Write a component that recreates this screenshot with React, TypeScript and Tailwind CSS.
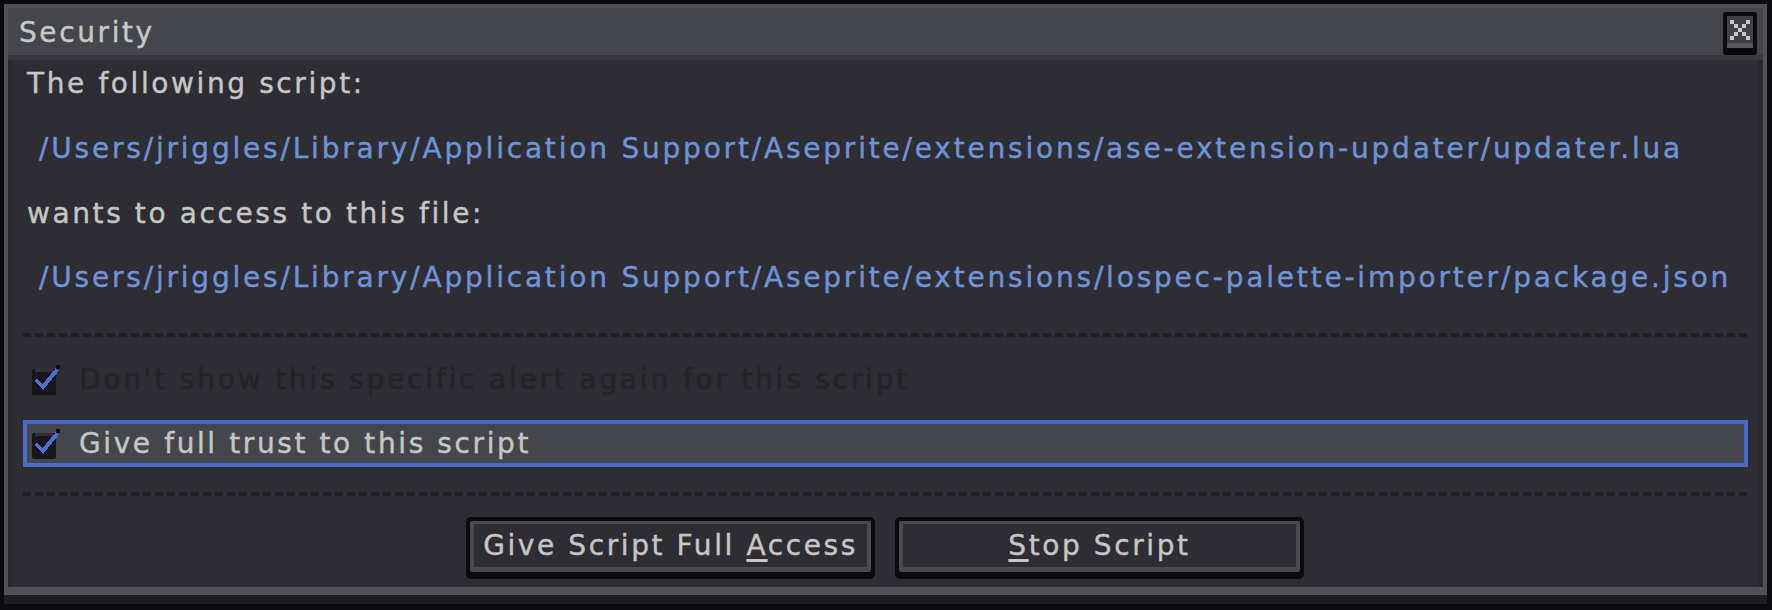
const font = "font-['DejaVu_Sans',sans-serif] text-[28px] leading-[32px] tracking-[2.6px] [-webkit-text-stroke:0.4px_currentColor]";
const wideFont = "font-['DejaVu_Sans',sans-serif] text-[28px] leading-[32px] tracking-[2.8px] [-webkit-text-stroke:0.4px_currentColor]";

const CloseX = () => {
  const cells = [
    [0, 0], [4, 0], [1, 1], [3, 1], [2, 2], [1, 3], [3, 3], [0, 4], [4, 4],
  ];
  return (
    <svg width="20" height="20" viewBox="0 0 20 20" shapeRendering="crispEdges">
      {cells.map(([x, y]) => (
        <rect key={`${x}-${y}`} x={x * 4} y={y * 4} width="4" height="4" fill="#c9c9c9" />
      ))}
    </svg>
  );
};

const CheckIcon = () => (
  <svg width="28" height="30" viewBox="0 0 28 30" shapeRendering="crispEdges">
    <rect x="0" y="4" width="24" height="26" rx="3" fill="#17171b" />
    <rect x="3" y="4" width="18" height="3" fill="#303036" />
    <rect x="24" y="0" width="4" height="4" fill="#0e0e10" />
    <polyline
      points="5,16 11,22 24,6"
      fill="none"
      stroke="#4b72d0"
      strokeWidth="4"
      strokeLinecap="square"
    />
  </svg>
);

const Button = ({ children }: { children: React.ReactNode }) => (
  <div className="w-[409px] h-[62px] bg-[#0b0b0d] rounded-[5px] pt-[4px] px-[4px] pb-[7px]">
    <div
      className={`h-full rounded-[2px] bg-[#2d2d33] border-t-[3px] border-x-[4px] border-b-[5px] border-[#4a4a50] flex items-center justify-center text-[#c6c6c6] ${font}`}
    >
      <span>{children}</span>
    </div>
  </div>
);

const Dashes = ({ className }: { className: string }) => (
  <div
    className={`h-[4px] ml-[11px] mr-[10px] bg-[repeating-linear-gradient(90deg,#1f1f24_0px,#1f1f24_8px,transparent_8px,transparent_12px)] ${className}`}
  />
);

const SecurityDialog = () => {
  return (
    <div className="w-[1772px] h-[610px] overflow-hidden bg-[#0b0b0d] pt-[4px] pl-[4px] pr-[5px] pb-[6px] flex flex-col">
      <div className="flex-1 flex flex-col border-t-4 border-x-4 border-b-[8px] border-[#505157]">
        {/* title bar */}
        <div className="h-[47px] bg-[#45464c] flex items-start justify-between pl-[11px] pr-[6px] pt-[4px]">
          <span className={`mt-[5px] text-[#c8c8c8] ${font}`}>Security</span>
          <div className="w-[34px] h-[43px] bg-[#0b0b0d] rounded-[3px] pt-[4px] px-[4px] pb-[7px]">
            <div className="h-full bg-[#404147] border-b-[5px] border-[#56575d] flex items-center justify-center">
              <CloseX />
            </div>
          </div>
        </div>
        <div className="h-[5px] bg-[#37383d]" />

        {/* body */}
        <div className="flex-1 bg-[#2d2d33] border-l-4 border-r-[5px] border-[#28282d] flex flex-col pt-[8px]">
          <div className={`pl-[15px] text-[#c6c6c6] ${font}`}>The following script:</div>
          <div className={`mt-[33px] pl-[27px] text-[#6f93d8] whitespace-nowrap ${wideFont}`}>
            /Users/jriggles/Library/Application Support/Aseprite/extensions/ase-extension-updater/updater.lua
          </div>
          <div className={`mt-[33px] pl-[15px] text-[#c6c6c6] ${font}`}>wants to access to this file:</div>
          <div className={`mt-[32px] pl-[27px] text-[#6f93d8] whitespace-nowrap ${wideFont}`}>
            /Users/jriggles/Library/Application Support/Aseprite/extensions/lospec-palette-importer/package.json
          </div>

          <Dashes className="mt-[39px]" />

          <div className="mt-[19px] h-[47px] ml-[11px] mr-[10px] border-4 border-transparent flex items-center pl-[5px] gap-[19px]">
            <CheckIcon />
            <span className={`text-[#232328] ${wideFont}`}>Don't show this specific alert again for this script</span>
          </div>

          <div className="mt-[17px] h-[47px] ml-[11px] mr-[10px] border-4 border-[#4a6cc4] bg-[#45464c] flex items-center pl-[5px] gap-[19px]">
            <CheckIcon />
            <span className={`text-[#c6c6c6] ${font}`}>Give full trust to this script</span>
          </div>

          <Dashes className="mt-[25px]" />

          <div className="mt-[21px] flex justify-center gap-[20px]">
            <Button>
              Give Script Full <u className="underline decoration-[3px] underline-offset-[4px]">A</u>ccess
            </Button>
            <Button>
              <u className="underline decoration-[3px] underline-offset-[4px]">S</u>top Script
            </Button>
          </div>
        </div>
      </div>
      <div className="h-[9px] bg-[#1e1e22]" />
    </div>
  );
};

export default SecurityDialog;
